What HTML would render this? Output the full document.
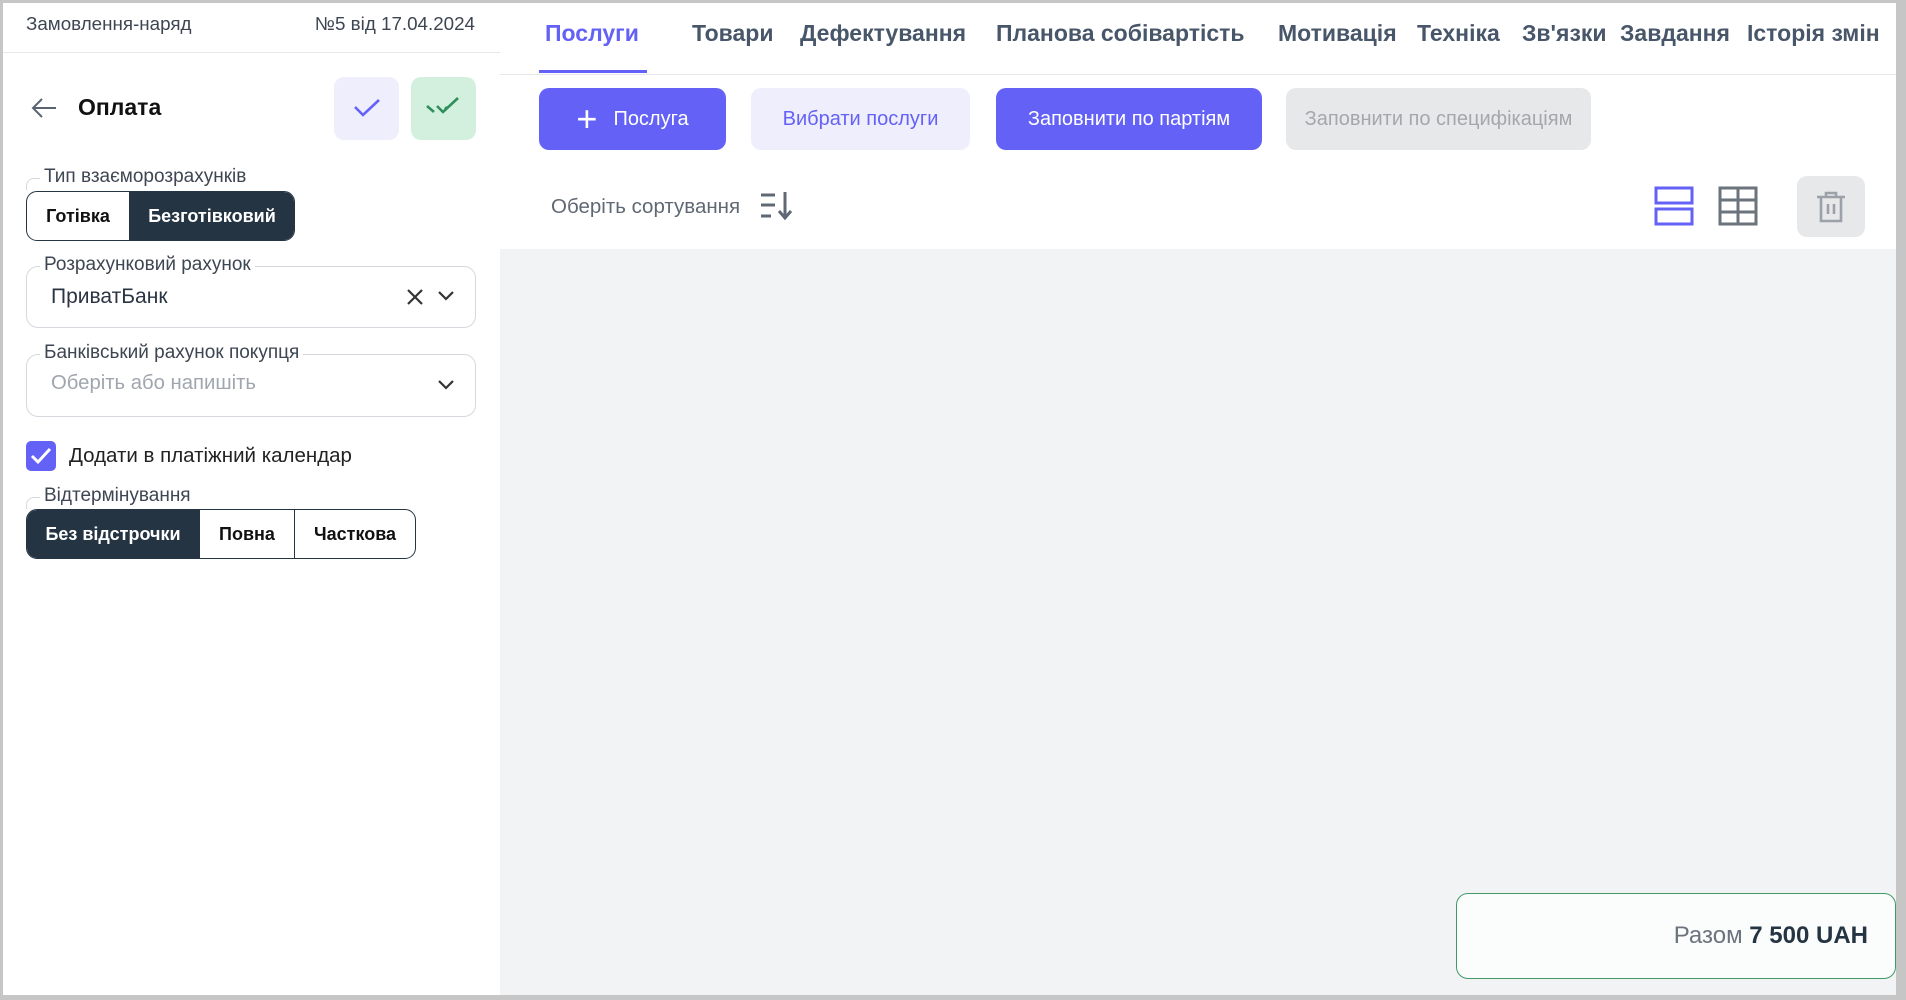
<!DOCTYPE html>
<html><head><meta charset="utf-8"><style>
*{box-sizing:border-box;margin:0;padding:0}
body{width:1906px;height:1000px;overflow:hidden;background:#c6c6c6;font-family:"Liberation Sans",sans-serif;position:relative}
.a{position:absolute}
#main{left:3px;top:3px;width:1893px;height:992px;background:#f2f3f5}
.t{position:absolute;white-space:nowrap}
.lab{position:absolute;font-size:19px;color:#3d4652;background:#fff;padding:0 4px;line-height:22px}
.fs{position:absolute;border:1px solid #d5d8dd;border-radius:12px}
.tg{position:absolute;display:flex;border:1.5px solid #253443;border-radius:11px;overflow:hidden}
.tg div{display:flex;align-items:center;justify-content:center;font-size:18px;font-weight:bold;color:#111;border-right:1.5px solid #253443}
.tg div:last-child{border-right:none}
.tg .on{background:#253443;color:#fff}
.tab{position:absolute;top:20px;font-size:23px;font-weight:bold;color:#48566a;white-space:nowrap}
.btn{position:absolute;top:88px;height:62px;border-radius:10px;display:flex;align-items:center;justify-content:center;font-size:20px}
.corner{position:absolute;width:14px;height:12px;border-left:1px solid #d5d8dd;border-top:1px solid #d5d8dd;border-top-left-radius:8px}
</style></head><body>
<div class="a" id="main"></div>
<!-- sidebar -->
<div class="a" style="left:3px;top:3px;width:497px;height:992px;background:#fff"></div>
<div class="t" style="left:26px;top:13px;font-size:18.8px;color:#3d4652">Замовлення-наряд</div>
<div class="t" style="right:1431px;top:13px;font-size:18.8px;color:#3d4652">№5 від 17.04.2024</div>
<div class="a" style="left:3px;top:52px;width:497px;height:1px;background:#e6e8eb"></div>
<svg class="a" style="left:30px;top:96px" width="28" height="24" viewBox="0 0 28 24"><path d="M26 12H3M12 3L3 12l9 9" fill="none" stroke="#5a6472" stroke-width="2"/></svg>
<div class="t" style="left:78px;top:94px;font-size:23px;font-weight:bold;color:#111">Оплата</div>
<div class="a" style="left:334px;top:77px;width:65px;height:63px;border-radius:10px;background:#efeefc"></div>
<svg class="a" style="left:352px;top:96px" width="30" height="24"><path d="M3 11l8 8L27 4" fill="none" stroke="#6461f7" stroke-width="2.6"/></svg>
<div class="a" style="left:411px;top:77px;width:65px;height:63px;border-radius:10px;background:#d3f0df"></div>
<svg class="a" style="left:425px;top:94px" width="38" height="24"><path d="M2 12l7 6" fill="none" stroke="#2e8f5b" stroke-width="2.6"/><path d="M12 12l6 6L33 4" fill="none" stroke="#2e8f5b" stroke-width="2.6"/><path d="M22 13l-2 2" fill="none" stroke="#2e8f5b" stroke-width="2.6"/></svg>

<div class="corner" style="left:26px;top:178px"></div>
<div class="lab" style="left:40px;top:166px">Тип взаєморозрахунків</div>
<div class="tg" style="left:26px;top:191px;width:269px;height:50px"><div style="width:103px">Готівка</div><div class="on" style="flex:1">Безготівковий</div></div>

<div class="fs" style="left:26px;top:266px;width:450px;height:62px"></div>
<div class="lab" style="left:40px;top:254px">Розрахунковий рахунок</div>
<div class="t" style="left:51px;top:285px;font-size:21px;color:#2a3442">ПриватБанк</div>
<svg class="a" style="left:406px;top:288px" width="18" height="18"><path d="M2 2l14 14M16 2L2 16" stroke="#333" stroke-width="2.2"/></svg>
<svg class="a" style="left:437px;top:290px" width="18" height="12"><path d="M2 2l7 7 7-7" fill="none" stroke="#333" stroke-width="2.2"/></svg>

<div class="fs" style="left:26px;top:354px;width:450px;height:63px"></div>
<div class="lab" style="left:40px;top:342px">Банківський рахунок покупця</div>
<div class="t" style="left:51px;top:372px;font-size:20.3px;color:#a0a6ae">Оберіть або напишіть</div>
<svg class="a" style="left:437px;top:379px" width="18" height="12"><path d="M2 2l7 7 7-7" fill="none" stroke="#333" stroke-width="2.2"/></svg>

<div class="a" style="left:26px;top:441px;width:30px;height:30px;border-radius:5px;background:#6461f7"></div>
<svg class="a" style="left:26px;top:441px" width="30" height="30"><path d="M6 15l6 6L24 8" fill="none" stroke="#fff" stroke-width="3"/></svg>
<div class="t" style="left:69px;top:444px;font-size:20.5px;color:#222">Додати в платіжний календар</div>

<div class="corner" style="left:26px;top:497px"></div>
<div class="lab" style="left:40px;top:485px">Відтермінування</div>
<div class="tg" style="left:26px;top:509px;width:390px;height:50px"><div class="on" style="width:173px">Без відстрочки</div><div style="width:95px">Повна</div><div style="flex:1">Часткова</div></div>

<!-- right -->
<div class="a" style="left:500px;top:3px;width:1396px;height:246px;background:#fff"></div>
<div class="a" style="left:500px;top:74px;width:1396px;height:1px;background:#e6e8eb"></div>
<div class="tab" style="left:545px;color:#6461f7">Послуги</div>
<div class="tab" style="left:692px">Товари</div>
<div class="tab" style="left:800px">Дефектування</div>
<div class="tab" style="left:996px">Планова собівартість</div>
<div class="tab" style="left:1278px">Мотивація</div>
<div class="tab" style="left:1417px">Техніка</div>
<div class="tab" style="left:1522px">Зв'язки</div>
<div class="tab" style="left:1620px">Завдання</div>
<div class="tab" style="left:1747px">Історія змін</div>
<div class="a" style="left:539px;top:70px;width:108px;height:3px;background:#6461f7"></div>

<div class="btn" style="left:539px;width:187px;background:#6461f7;color:#fff"><span style="font-size:36px;font-weight:300;margin-right:16px;line-height:1">+</span>Послуга</div>
<div class="btn" style="left:751px;width:219px;background:#efeefc;color:#6461f7">Вибрати послуги</div>
<div class="btn" style="left:996px;width:266px;background:#6461f7;color:#fff">Заповнити по партіям</div>
<div class="btn" style="left:1286px;width:305px;background:#e7e8ea;color:#a4a7ab">Заповнити по специфікаціям</div>

<div class="t" style="left:551px;top:195px;font-size:20.5px;color:#5f6873">Оберіть сортування</div>
<svg class="a" style="left:760px;top:190px" width="34" height="32"><path d="M1 5h14M1 15h14M1 26h10" stroke="#5f6873" stroke-width="3"/><path d="M25 2v25M19 21l6 7 6-7" fill="none" stroke="#5f6873" stroke-width="3"/></svg>
<svg class="a" style="left:1654px;top:186px" width="40" height="40"><rect x="2" y="2" width="36" height="15" fill="none" stroke="#6461f7" stroke-width="3"/><rect x="2" y="23" width="36" height="15" fill="none" stroke="#6461f7" stroke-width="3"/></svg>
<svg class="a" style="left:1718px;top:186px" width="40" height="40"><rect x="2" y="2" width="36" height="36" fill="none" stroke="#6b737d" stroke-width="3"/><path d="M2 14h36M2 26h36M20 2v36" stroke="#6b737d" stroke-width="3"/></svg>
<div class="a" style="left:1797px;top:176px;width:68px;height:61px;border-radius:10px;background:#e7e8ea"></div>
<svg class="a" style="left:1814px;top:190px" width="34" height="34"><path d="M3 7h28M12 7V3h10v4M7 7v24h20V7M14 14v10M20 14v10" fill="none" stroke="#9ba1a8" stroke-width="2.6"/></svg>

<div class="a" style="left:1456px;top:893px;width:440px;height:86px;border:1.5px solid #3f9a66;border-radius:12px;background:#fbfcfc"></div>
<div class="t" style="right:38px;top:922px;font-size:24px;color:#6b737d">Разом <b style="color:#253443">7 500 UAH</b></div>
</body></html>
